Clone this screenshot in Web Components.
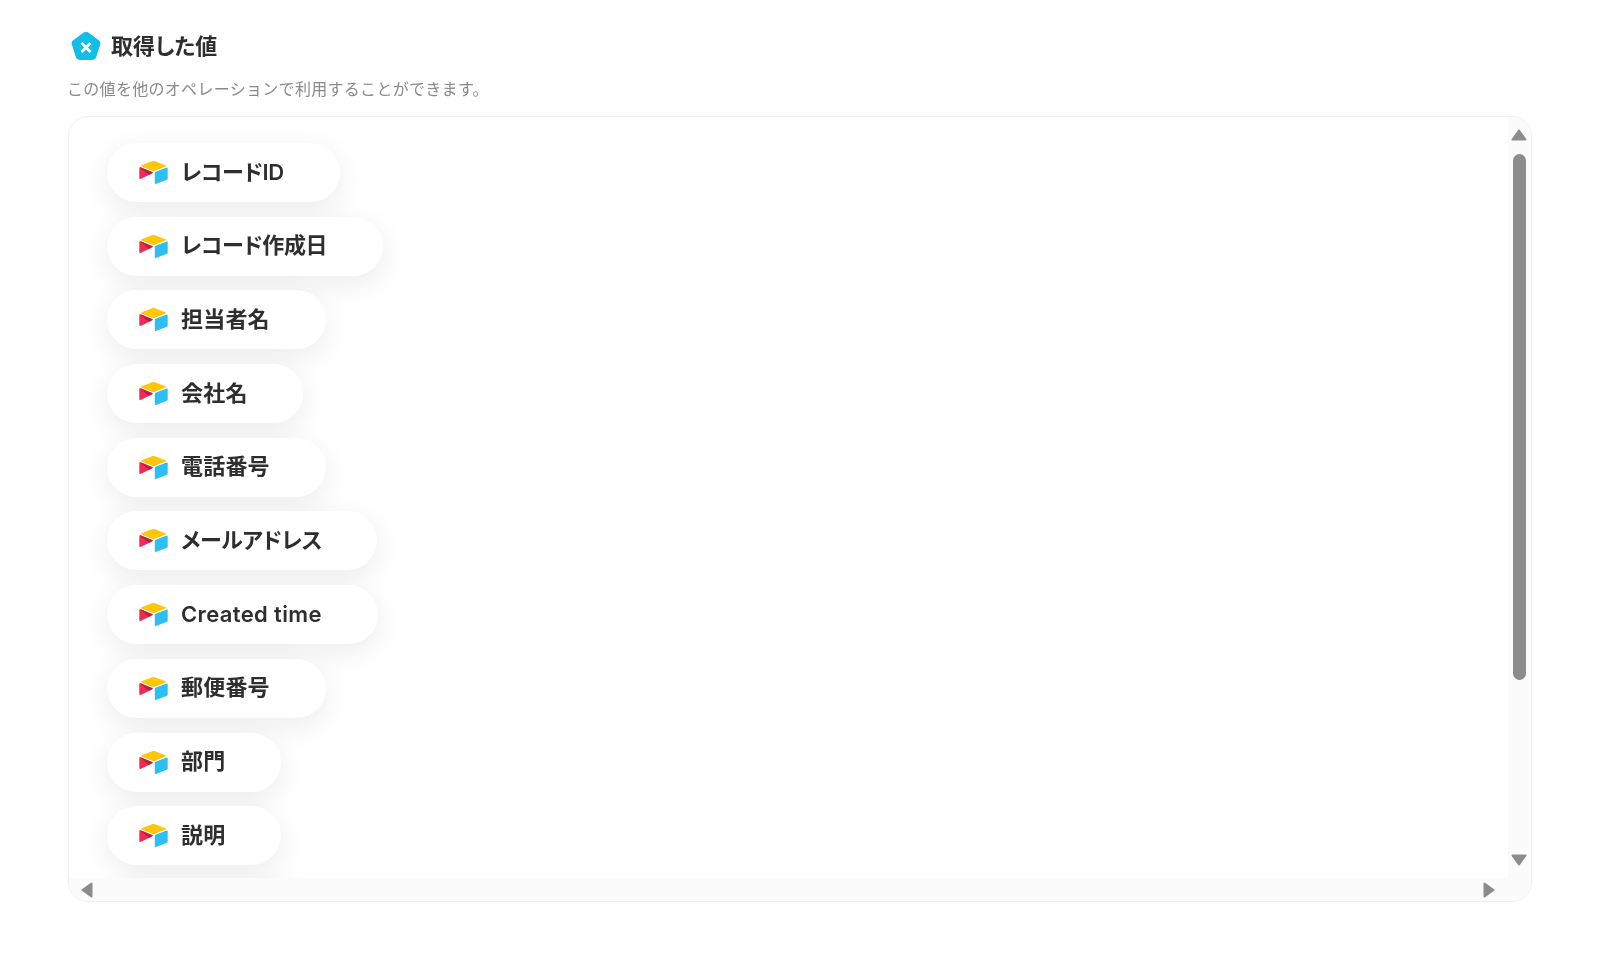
<!DOCTYPE html>
<html lang="ja">
<head>
<meta charset="utf-8">
<title>取得した値</title>
<style>
html,body{margin:0;padding:0;background:#fff;}
body{width:1600px;height:954px;overflow:hidden;font-family:Inter,"Noto Sans CJK JP",sans-serif;filter:blur(.45px);}
</style>
</head>
<body>
<template id="t-pill">
<style>
:host{display:flex;align-items:center;gap:13px;width:var(--w);height:59px;box-sizing:border-box;padding:0 0 0 32px;background:#fff;border-radius:30px;box-shadow:0 8px 30px rgba(0,0,0,.08);flex:none;font:600 22px/1 Inter,"Noto Sans CJK JP",sans-serif;letter-spacing:var(--ls,.2px);color:#2e2e2e;font-feature-settings:"palt";white-space:nowrap;}
svg{width:29px;height:25px;flex:none;}
span{position:relative;top:-1px;}
</style>
<svg viewBox="0 0 29 25"><path d="M13 1.200 2.600 5.200c-.6.300-.6 1 0 1.300L13 10.700c1 .4 2 .4 3 0L26.500 6.500c.6-.3.6-1 0-1.300L16 1.200c-1-.4-2-.4-3 0z" fill="#ffc60a"/><path d="M15.800 12.800V23.300c0 .6.600 1 1.100.8L28 19.700c.4-.2.700-.5.700-1V8.300c0-.6-.6-1-1.100-.8L16.500 11.800c-.4.200-.7.500-.7 1z" fill="#2dbff2"/><path d="M13.200 13.300 9.800 15 1.500 19c-.5.300-1.200-.1-1.200-.7V8c0-.2.100-.4.200-.5.100-.1.200-.2.300-.2.200-.1.500-.1.700 0L13.100 12c.6.200.7 1 .1 1.300z" fill="#ee2a55"/><path d="M13.200 13.300 9.800 15 1 7.300c.2-.1.500-.1.700 0L13.100 12c.6.200.7 1 .1 1.300z" fill="#a81e3f" opacity=".75"/></svg>
<span><slot></slot></span>
</template>

<template id="t-head">
<style>
:host{display:block;padding:28px 68px 0 67px;}
.title{display:flex;align-items:center;gap:9px;height:36px;padding-left:3px;font:600 22px/1 Inter,"Noto Sans CJK JP",sans-serif;color:#2e2e2e;font-feature-settings:"palt";}
svg{width:32px;height:31px;flex:none;}
.sub{margin-top:14px;font:400 16px/22px Inter,"Noto Sans CJK JP",sans-serif;color:#8a8a8a;letter-spacing:.3px;}
</style>
<div class="title"><svg viewBox="0 0 32 31"><path d="M13.700 1.500a4 4 0 0 1 4.600 0l10.500 7.700a4 4 0 0 1 1.400 4.400l-4 12.500a4 4 0 0 1-3.800 2.800H9.600a4 4 0 0 1-3.800-2.800l-4-12.500a4 4 0 0 1 1.400-4.400z" fill="#12bde8"/><path d="M11.500 12 20.500 21M20.500 12 11.500 21" stroke="#fff" stroke-width="2.800"/></svg><span><slot name="title"></slot></span></div>
<div class="sub"><slot name="sub"></slot></div>
</template>

<template id="t-scroll">
<style>
:host{display:grid;grid-template-columns:1fr 23px;grid-template-rows:1fr 23px;margin:16px 68px 0 68px;height:786px;box-sizing:border-box;border:1px solid #f0f0f0;border-radius:20px;overflow:hidden;background:#fff;}
.view{overflow:hidden;padding:26px 0 0 38px;display:flex;flex-direction:column;gap:14.700px;}
.v{background:#fbfbfb;display:flex;flex-direction:column;align-items:center;padding:12px 1px 12px 0;}
.h{background:#fbfbfb;display:flex;align-items:center;justify-content:space-between;padding:0 13px 0 12px;}
.c{background:#fbfbfb;}
.thumb{width:13px;height:526px;margin-top:13px;background:#8c8c8c;border-radius:7px;}
.sp{flex:1;}
svg{display:block;flex:none;}
</style>
<div class="view"><slot></slot></div>
<div class="v"><svg width="16" height="12" viewBox="0 0 16 12"><path d="M8 1.500 14.500 10.500H1.500z" fill="#8c8c8c" stroke="#8c8c8c" stroke-width="2" stroke-linejoin="round"/></svg><div class="thumb"></div><div class="sp"></div><svg width="16" height="12" viewBox="0 0 16 12"><path d="M8 10.500 14.500 1.500H1.500z" fill="#8c8c8c" stroke="#8c8c8c" stroke-width="2" stroke-linejoin="round"/></svg></div>
<div class="h"><svg width="12" height="16" viewBox="0 0 12 16"><path d="M1.500 8 10.500 1.500V14.500z" fill="#8c8c8c" stroke="#8c8c8c" stroke-width="2" stroke-linejoin="round"/></svg><svg width="12" height="16" viewBox="0 0 12 16"><path d="M10.500 8 1.500 1.500V14.500z" fill="#8c8c8c" stroke="#8c8c8c" stroke-width="2" stroke-linejoin="round"/></svg></div>
<div class="c"></div>
</template>

<value-header>
<span slot="title">取得した値</span>
<span slot="sub">この値を他のオペレーションで利用することができます。</span>
</value-header>
<value-scroll>
<value-pill style="--w:233px;--ls:-.3px">レコードID</value-pill>
<value-pill style="--w:276px;--ls:-.35px">レコード作成日</value-pill>
<value-pill style="--w:219px">担当者名</value-pill>
<value-pill style="--w:196px">会社名</value-pill>
<value-pill style="--w:219px">電話番号</value-pill>
<value-pill style="--w:270px;--ls:-.35px">メールアドレス</value-pill>
<value-pill style="--w:271px;--ls:.37px">Created time</value-pill>
<value-pill style="--w:219px">郵便番号</value-pill>
<value-pill style="--w:174px">部門</value-pill>
<value-pill style="--w:174px">説明</value-pill>
<value-pill style="--w:196px"></value-pill>
</value-scroll>
<script>
function def(name,id){customElements.define(name,class extends HTMLElement{constructor(){super();this.attachShadow({mode:"open"}).appendChild(document.getElementById(id).content.cloneNode(true));}});}
def("value-pill","t-pill");def("value-header","t-head");def("value-scroll","t-scroll");
</script>
</body>
</html>
